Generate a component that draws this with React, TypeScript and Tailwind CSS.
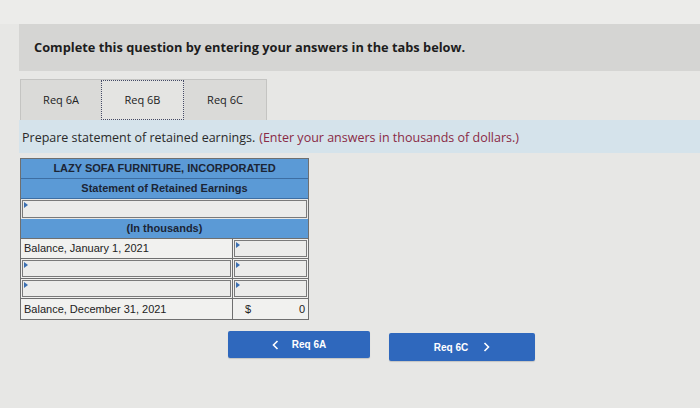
import React from 'react'

function Marker() {
  return (
    <span className="absolute left-[1px] top-[1px] w-0 h-0 border-t-[3px] border-b-[3px] border-l-[4px] border-t-transparent border-b-transparent border-l-[#3c6fb0]" />
  )
}

function InputCell({ className = '' }: { className?: string }) {
  return (
    <div className={"relative h-full bg-[#ececea] border-[1.5px] border-[#7a7a7a] " + className}>
      <Marker />
    </div>
  )
}

function App() {
  const tabs = [
    { label: 'Req 6A', w: 'w-[80px]', active: false },
    { label: 'Req 6B', w: 'w-[83px]', active: true },
    { label: 'Req 6C', w: 'w-[82px]', active: false },
  ]

  return (
    <div className="w-[700px] h-[408px] bg-[#e7e7e5] overflow-hidden font-['Open_Sans',sans-serif] text-[#222]">
      <div className="h-[24px] bg-[#ececea]" />
      <div className="ml-[19px] h-[47px] bg-[#d5d5d3] flex items-center pl-[15px]">
        <span className="text-[12.8px] font-bold text-[#1d1d1d]">
          Complete this question by entering your answers in the tabs below.
        </span>
      </div>

      <div className="ml-[20px] mt-[8px] flex h-[41px]">
        <div className="flex border border-[#c4c4c2] border-b-0">
          {tabs.map((t) => (
            <div
              key={t.label}
              className={
                t.w +
                " flex items-center justify-center text-[11px] text-[#222] " +
                (t.active
                  ? "bg-[#e4e4e2] outline-[1.5px] outline-dotted outline-[#444a66] -outline-offset-[1px]"
                  : "bg-[#dadad8]")
              }
            >
              {t.label}
            </div>
          ))}
        </div>
      </div>

      <div className="ml-[19px] h-[33px] bg-[#d5e3eb] flex items-center pl-[3px] pt-[3px] text-[12.5px]">
        <span className="text-[#2a2a2a]">Prepare statement of retained earnings.</span>
        <span className="ml-[4px] text-[#8a2a45]">(Enter your answers in thousands of dollars.)</span>
      </div>

      <div className="ml-[20px] mt-[5px] w-[289px] border border-[#6f6f6f] font-['Liberation_Sans',Arial,sans-serif] text-[11px]">
        <div className="h-[20px] bg-[#5b9ad6] flex items-center justify-center font-bold text-[#1b2535] border-b border-[#3d6ea3]">
          LAZY SOFA FURNITURE, INCORPORATED
        </div>
        <div className="h-[20px] bg-[#5b9ad6] flex items-center justify-center font-bold text-[#1b2535] border-b border-[#3d6ea3]">
          Statement of Retained Earnings
        </div>
        <div className="h-[20px] bg-[#e8e8e6] p-[1px]">
          <InputCell />
        </div>
        <div className="h-[20px] bg-[#5b9ad6] flex items-center justify-center font-bold text-[#1b2535] border-b border-[#6f6f6f]">
          (In thousands)
        </div>
        <div className="h-[20px] flex border-b border-[#6f6f6f]">
          <div className="w-[212px] bg-[#f1f1ef] flex items-center pl-[3px] border-r border-[#6f6f6f]">
            Balance, January 1, 2021
          </div>
          <div className="flex-1 p-[1px] bg-[#f1f1ef]">
            <InputCell />
          </div>
        </div>
        <div className="h-[20px] flex border-b border-[#6f6f6f]">
          <div className="w-[212px] p-[1px] bg-[#f1f1ef] border-r border-[#6f6f6f]">
            <InputCell />
          </div>
          <div className="flex-1 p-[1px] bg-[#f1f1ef]">
            <InputCell />
          </div>
        </div>
        <div className="h-[20px] flex border-b border-[#6f6f6f]">
          <div className="w-[212px] p-[1px] bg-[#f1f1ef] border-r border-[#6f6f6f]">
            <InputCell />
          </div>
          <div className="flex-1 p-[1px] bg-[#f1f1ef]">
            <InputCell />
          </div>
        </div>
        <div className="h-[20px] flex">
          <div className="w-[212px] bg-[#f1f1ef] flex items-center pl-[3px] border-r border-[#6f6f6f]">
            Balance, December 31, 2021
          </div>
          <div className="flex-1 bg-[#f1f1ef] flex items-center justify-between pl-[12px] pr-[3px]">
            <span>$</span>
            <span>0</span>
          </div>
        </div>
      </div>

      <div className="mt-[11px] ml-[228px] flex gap-[19px]">
        <button className="w-[142px] h-[27px] bg-[#2f68bd] rounded-[2px] flex items-center justify-center gap-[13px] text-white text-[10px] font-bold font-['Liberation_Sans',Arial,sans-serif] shadow-[0_1px_1px_rgba(0,0,0,0.15)]">
          <svg width="7" height="10" viewBox="0 0 7 10" fill="none">
            <path d="M5.5 1 L1.5 5 L5.5 9" stroke="white" strokeWidth="1.6" />
          </svg>
          <span>Req 6A</span>
        </button>
        <button className="w-[146px] h-[28px] mt-[2px] bg-[#2f68bd] rounded-[2px] flex items-center justify-center gap-[15px] text-white text-[10px] font-bold font-['Liberation_Sans',Arial,sans-serif] shadow-[0_1px_1px_rgba(0,0,0,0.15)]">
          <span>Req 6C</span>
          <svg width="7" height="10" viewBox="0 0 7 10" fill="none">
            <path d="M1.5 1 L5.5 5 L1.5 9" stroke="white" strokeWidth="1.6" />
          </svg>
        </button>
      </div>
    </div>
  )
}

export default App
